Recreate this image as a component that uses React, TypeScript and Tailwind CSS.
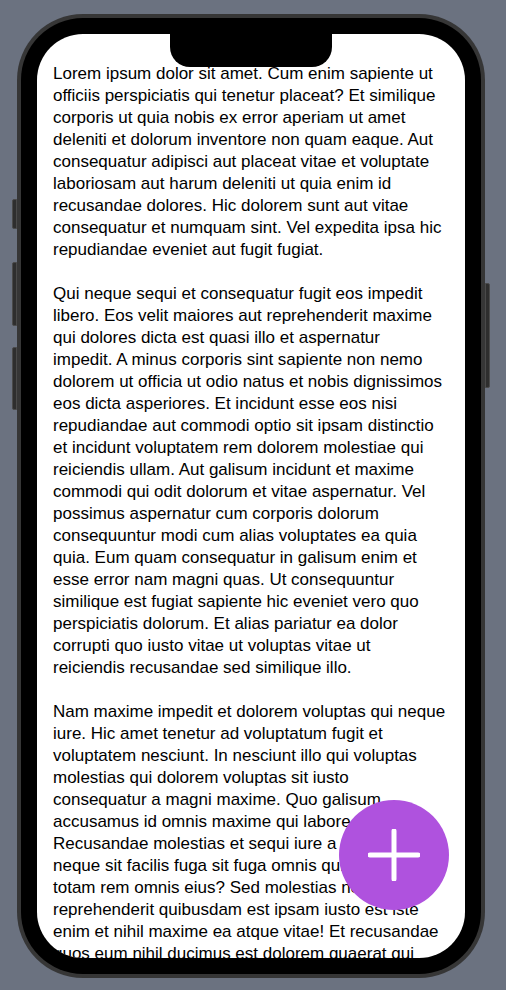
// lines are kept as in the reference so the wrapping matches
const paragraphs: string[][] = [
    [
        'Lorem ipsum dolor sit amet. Cum enim sapiente ut',
        'officiis perspiciatis qui tenetur placeat? Et similique',
        'corporis ut quia nobis ex error aperiam ut amet',
        'deleniti et dolorum inventore non quam eaque. Aut',
        'consequatur adipisci aut placeat vitae et voluptate',
        'laboriosam aut harum deleniti ut quia enim id',
        'recusandae dolores. Hic dolorem sunt aut vitae',
        'consequatur et numquam sint. Vel expedita ipsa hic',
        'repudiandae eveniet aut fugit fugiat.',
    ],
    [
        'Qui neque sequi et consequatur fugit eos impedit',
        'libero. Eos velit maiores aut reprehenderit maxime',
        'qui dolores dicta est quasi illo et aspernatur',
        'impedit. A minus corporis sint sapiente non nemo',
        'dolorem ut officia ut odio natus et nobis dignissimos',
        'eos dicta asperiores. Et incidunt esse eos nisi',
        'repudiandae aut commodi optio sit ipsam distinctio',
        'et incidunt voluptatem rem dolorem molestiae qui',
        'reiciendis ullam. Aut galisum incidunt et maxime',
        'commodi qui odit dolorum et vitae aspernatur. Vel',
        'possimus aspernatur cum corporis dolorum',
        'consequuntur modi cum alias voluptates ea quia',
        'quia. Eum quam consequatur in galisum enim et',
        'esse error nam magni quas. Ut consequuntur',
        'similique est fugiat sapiente hic eveniet vero quo',
        'perspiciatis dolorum. Et alias pariatur ea dolor',
        'corrupti quo iusto vitae ut voluptas vitae ut',
        'reiciendis recusandae sed similique illo.',
    ],
    [
        'Nam maxime impedit et dolorem voluptas qui neque',
        'iure. Hic amet tenetur ad voluptatum fugit et',
        'voluptatem nesciunt. In nesciunt illo qui voluptas',
        'molestias qui dolorem voluptas sit iusto',
        'consequatur a magni maxime. Quo galisum',
        'accusamus id omnis maxime qui labore et.',
        'Recusandae molestias et sequi iure a nihil',
        'neque sit facilis fuga sit fuga omnis quis',
        'totam rem omnis eius? Sed molestias nemo',
        'reprehenderit quibusdam est ipsam iusto est iste',
        'enim et nihil maxime ea atque vitae! Et recusandae',
        'quos eum nihil ducimus est dolorem quaerat qui',
        'voluptas sit modi facilis et voluptatem quia.',
    ],
];

function SideButton({ className }: { className: string }) {
    return <div className={`w-[5px] rounded-l-[2px] border border-[#4a4a4a] bg-[#2e2e2e] ${className}`} />;
}

export default function App() {
    return (
        <div className="min-h-[990px] w-[506px] bg-[#6b7280] flex items-start pl-[12px] pt-[14px]">
            {/* left hardware buttons */}
            <div className="flex flex-col w-[5px]">
                <SideButton className="mt-[185px] h-[30px]" />
                <SideButton className="mt-[33px] h-[64px]" />
                <SideButton className="mt-[21px] h-[63px]" />
            </div>

            {/* phone body */}
            <div className="rounded-[66px] bg-[#363636] p-[4px]">
                <div className="rounded-[62px] bg-black p-[16px]">
                    <div className="relative h-[924px] w-[428px] overflow-hidden rounded-[46px] bg-white">
                        <div className="px-4 pt-[29px] text-[17px] leading-[22px] text-black [font-family:'Liberation_Sans',Arial,sans-serif]">
                            {paragraphs.map((lines, i) => (
                                <p key={i} className={i > 0 ? 'mt-[22px]' : ''}>
                                    {lines.map((line, j) => (
                                        <span key={j} className="block whitespace-nowrap">{line}</span>
                                    ))}
                                </p>
                            ))}
                        </div>

                        {/* notch */}
                        <div className="absolute left-1/2 top-0 h-[33px] w-[162px] -translate-x-1/2 rounded-b-[20px] bg-black" />

                        {/* floating add button */}
                        <button className="absolute bottom-[48px] right-[16px] flex size-[110px] items-center justify-center rounded-full bg-[#af52de]">
                            <svg width="52" height="52" viewBox="0 0 52 52" fill="none" stroke="white" strokeWidth="5" strokeLinecap="round">
                                <path d="M26 2v48M2 26h48" />
                            </svg>
                        </button>
                    </div>
                </div>
            </div>

            {/* right hardware button */}
            <div className="flex flex-col w-[5px]">
                <div className="mt-[269px] h-[105px] w-[5px] rounded-r-[2px] border border-[#4a4a4a] bg-[#2e2e2e]" />
            </div>
        </div>
    );
}
